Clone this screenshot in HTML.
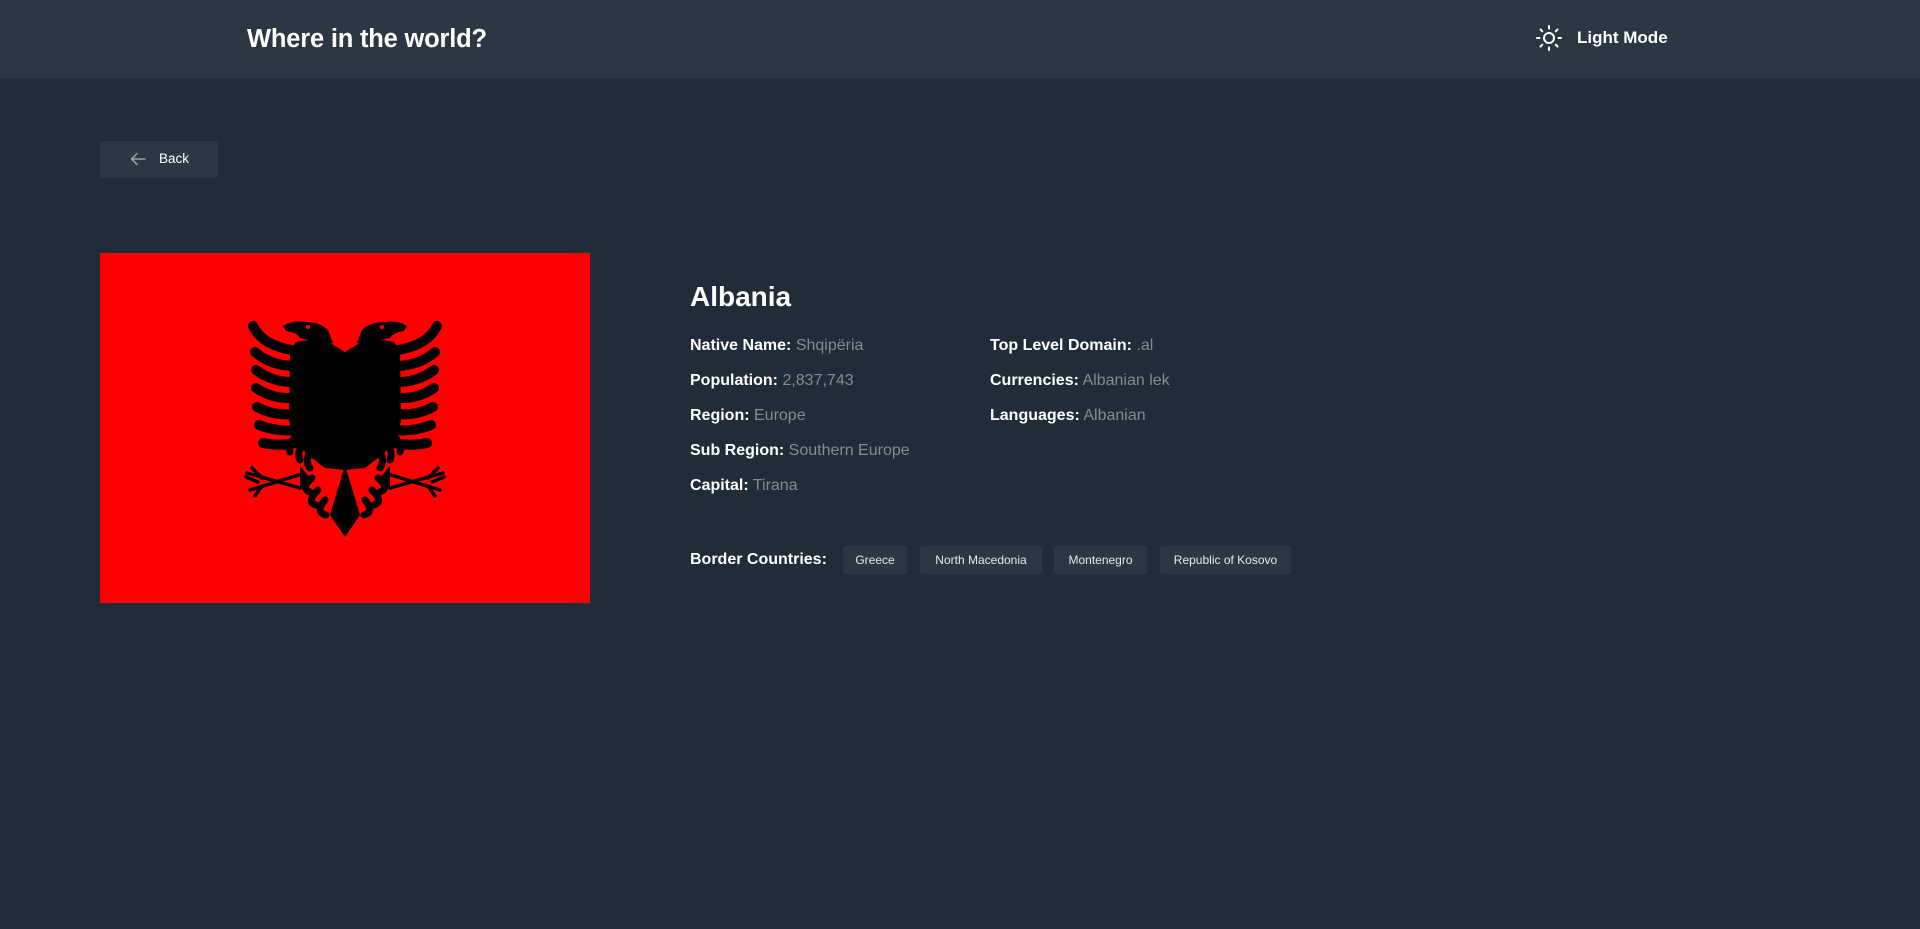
<!DOCTYPE html>
<html><head><meta charset="utf-8"><style>
*{margin:0;padding:0;box-sizing:border-box}
body{width:1920px;height:929px;background:#202c37;font-family:"Liberation Sans",sans-serif;color:#fff;position:relative;overflow:hidden}
.hdr{position:absolute;left:0;top:0;width:1920px;height:78px;background:#2b3844}
.title{position:absolute;left:247px;top:25px;font-size:25.5px;font-weight:bold;letter-spacing:-0.2px}
.mode{position:absolute;left:1577px;top:28px;font-size:17px;font-weight:bold}
.back{position:absolute;left:100px;top:141px;width:118px;height:37px;background:#2b3743;border-radius:3px;font-size:13.5px}
.back span{position:absolute;left:59px;top:10px}
.flag{position:absolute;left:100px;top:253px;width:490px;height:350px;background:#ff0000}
h1{position:absolute;left:690px;top:281px;font-size:28px;font-weight:bold}
.row{position:absolute;font-size:16px;white-space:nowrap}
.row b{color:#fff}
.row span{color:#858b93}
.bc{position:absolute;left:690px;top:551px;font-size:16px;font-weight:bold}
.tag{position:absolute;top:546px;height:28px;background:#2b3743;border-radius:3px;font-size:12px;text-align:center;line-height:28px;color:#e8e8e8}
</style></head><body>
<div class="hdr"></div>
<div class="title">Where in the world?</div>
<svg style="position:absolute;left:1535px;top:24px" width="28" height="28" viewBox="0 0 28 28" fill="none" stroke="#fff" stroke-width="2" stroke-linecap="round">
<circle cx="14" cy="14" r="5"/>
<path d="M14 2v2.5M14 23.5V26M2 14h2.5M23.5 14H26M5.5 5.5l1.8 1.8M20.7 20.7l1.8 1.8M5.5 22.5l1.8-1.8M20.7 7.3l1.8-1.8"/>
</svg>
<div class="mode">Light Mode</div>
<div class="back">
<svg style="position:absolute;left:30px;top:11px" width="16" height="14" viewBox="0 0 16 14" fill="none" stroke="#9aa0a8" stroke-width="1.5" stroke-linecap="round" stroke-linejoin="round"><path d="M15 7H2M7 1.5L1.5 7 7 12.5"/></svg>
<span>Back</span></div>
<div class="flag"></div>
<svg style="position:absolute;left:0;top:0" width="700" height="620" viewBox="0 0 700 620">
<g id="h" fill="#000" stroke="#000">
<path d="M345,352 L330,343 Q312,338 296,342 L290,350 L289,420 Q292,440 308,455 L325,468 L345,470 Z" stroke="none"/>
<path d="M345,465 L330,515 L345,537 Z" stroke="none"/>
<g fill="none" stroke-width="10" stroke-linecap="round">
<path d="M253,326 Q262,345 292,350"/>
<path d="M255,352 Q270,365 292,366"/>
<path d="M256,370 Q272,382 292,382"/>
<path d="M256,388 Q272,399 292,398"/>
<path d="M257,407 Q274,416 293,414"/>
<path d="M259,425 Q276,432 296,430"/>
<path d="M263,443 Q282,447 300,442"/>
<path d="M296,436 Q287,446 290,452" stroke-width="7"/>
<path d="M305,440 Q296,452 300,460" stroke-width="7"/>
<path d="M312,448 Q304,460 310,468" stroke-width="7"/>
<path d="M312,478 Q300,488 310,492" stroke-width="7"/>
<path d="M318,490 Q306,502 316,505" stroke-width="7"/>
<path d="M325,500 Q315,512 326,515" stroke-width="7"/>
</g>
<path d="M247,473 L300,488 M250,490 L302,474 M252,468 L262,478 M246,477 L258,482 M255,496 L262,486" stroke-width="3.5" fill="none" stroke-linecap="round"/>
<path d="M300,466 L312,480 L300,490 Z" stroke="none"/>
<path d="M283,326 Q292,320 305,322 Q320,322 328,330 L333,343 L318,346 Q312,340 300,338 Q296,332 286,331 Z" stroke="none"/>
<path d="M305,340 Q312,348 314,360 Q318,368 324,364 Q330,356 330,346 Z" stroke="none"/>
</g>
<circle cx="308" cy="327" r="2" fill="#f00"/>
<use href="#h" transform="translate(690,0) scale(-1,1)"/>
<circle cx="382" cy="327" r="2" fill="#f00"/>
</svg>
<h1>Albania</h1>
<div class="row" style="left:690px;top:337px"><b>Native Name:</b> <span>Shqipëria</span></div>
<div class="row" style="left:690px;top:372px"><b>Population:</b> <span>2,837,743</span></div>
<div class="row" style="left:690px;top:407px"><b>Region:</b> <span>Europe</span></div>
<div class="row" style="left:690px;top:442px"><b>Sub Region:</b> <span>Southern Europe</span></div>
<div class="row" style="left:690px;top:477px"><b>Capital:</b> <span>Tirana</span></div>
<div class="row" style="left:990px;top:337px"><b>Top Level Domain:</b> <span>.al</span></div>
<div class="row" style="left:990px;top:372px"><b>Currencies:</b> <span>Albanian lek</span></div>
<div class="row" style="left:990px;top:407px"><b>Languages:</b> <span>Albanian</span></div>
<div class="bc">Border Countries:</div>
<div class="tag" style="left:843px;width:64px">Greece</div>
<div class="tag" style="left:920px;width:122px">North Macedonia</div>
<div class="tag" style="left:1054px;width:93px">Montenegro</div>
<div class="tag" style="left:1160px;width:131px">Republic of Kosovo</div>
</body></html>
